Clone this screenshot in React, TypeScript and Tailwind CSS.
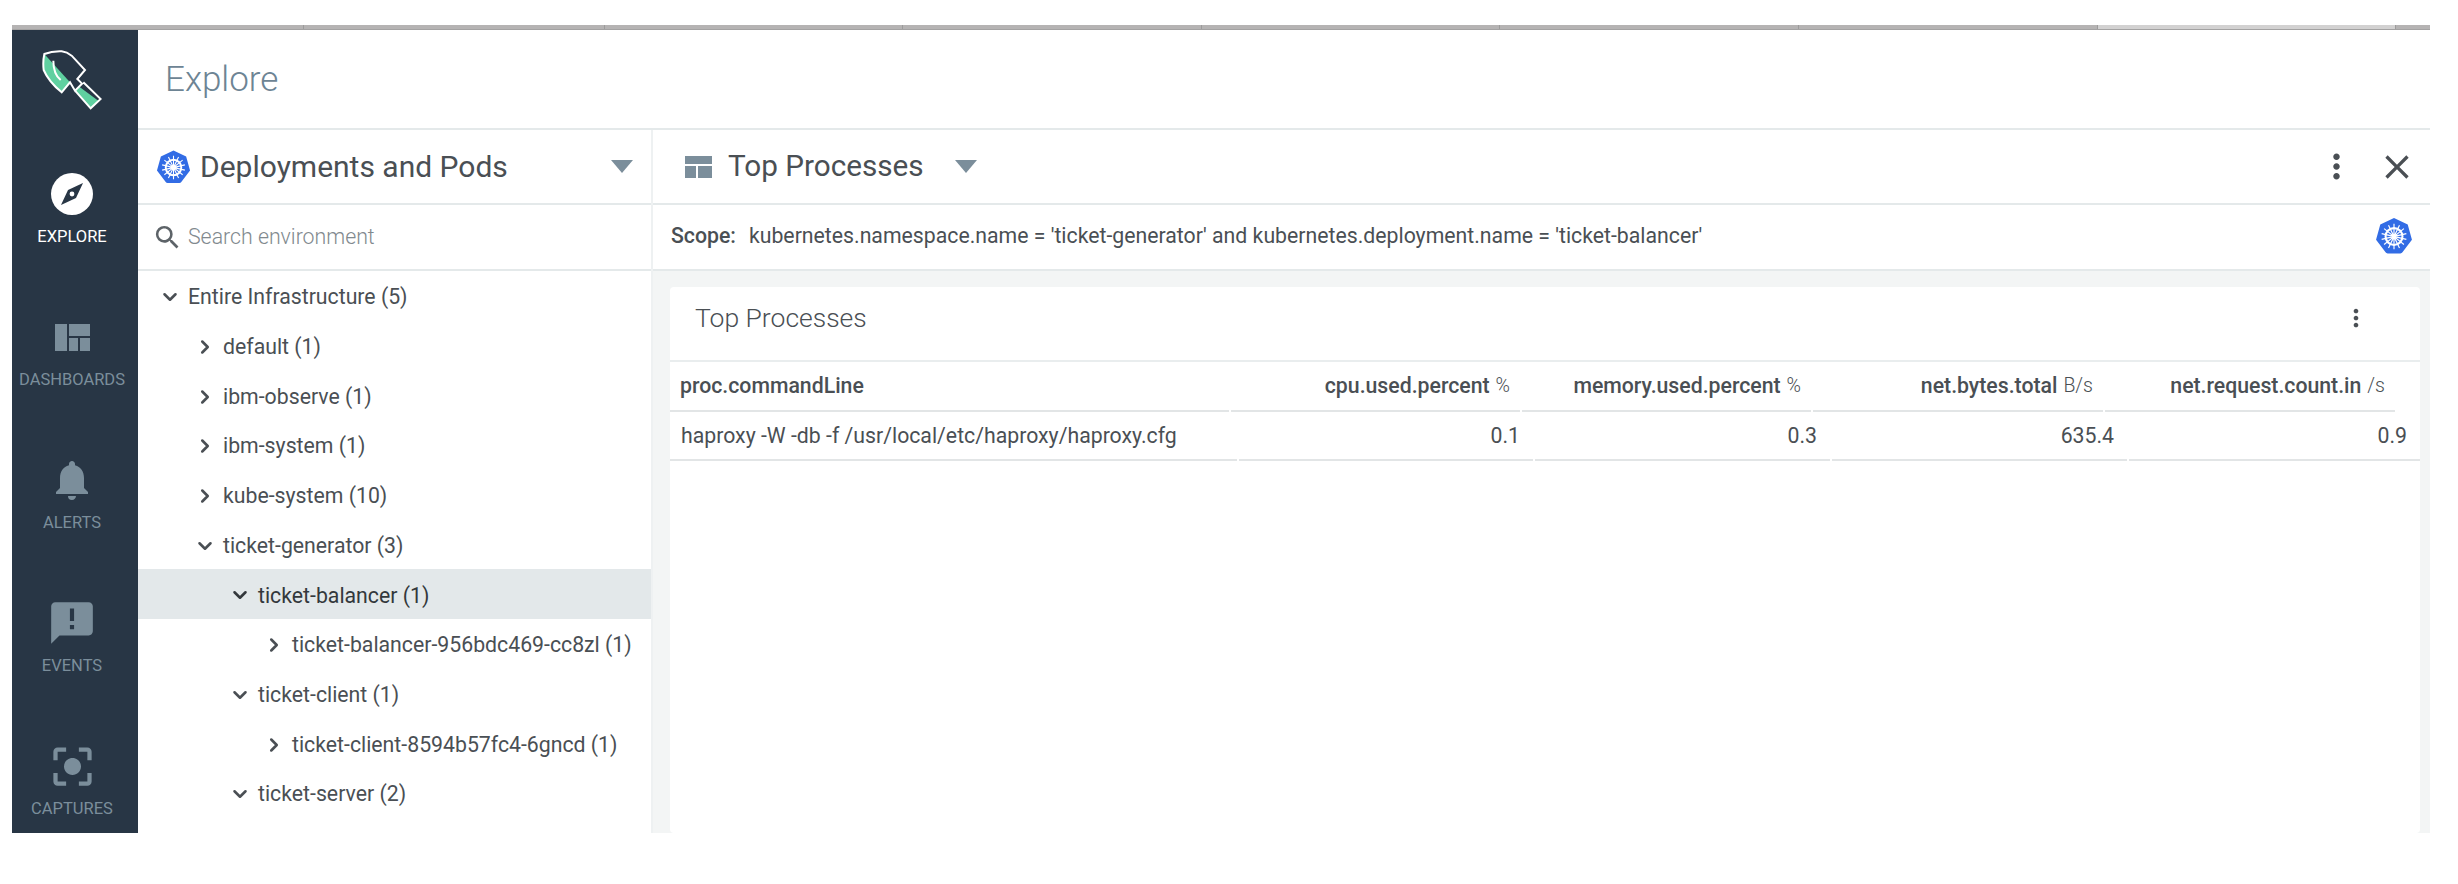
import { ChevronDown, ChevronRight } from 'lucide-react';
import {
  MdAnnouncement,
  MdCenterFocusStrong,
  MdClose,
  MdMoreVert,
  MdNotifications,
  MdSearch,
} from 'react-icons/md';

const KubeLogo = ({ className }: { className: string }) => (
  <svg viewBox="0 0 36 36" className={className}>
    <path
      d="M18 1 L31 7.2 L35 21.5 L26 33.5 Q25.4 34.5 24 34.5 L12 34.5 Q10.6 34.5 10 33.5 L1 21.5 L5 7.2 Z"
      fill="#326ce5"
    />
    <g stroke="#fff" fill="none">
      <circle cx="18" cy="18.5" r="8" strokeWidth="2" />
      <circle cx="18" cy="18.5" r="1.6" fill="#fff" stroke="none" />
      <path
        d="M18 6.5V30.5M8.6 11L27.4 26M27.4 11L8.6 26M6.3 21.2L29.7 15.8M29.7 21.2L6.3 15.8M12.8 29.3L23.2 7.7M23.2 29.3L12.8 7.7"
        strokeWidth="1.1"
      />
    </g>
  </svg>
);

const navItems = [
  { label: 'DASHBOARDS', icon: 'dash' },
  { label: 'ALERTS', icon: 'bell' },
  { label: 'EVENTS', icon: 'events' },
  { label: 'CAPTURES', icon: 'captures' },
];

const NavIcon = ({ icon }: { icon: string }) => {
  if (icon === 'dash') {
    return (
      <svg viewBox="0 0 35 27" className="w-[35px] h-[27px]" fill="#7b8e9b">
        <rect x="0" y="0" width="12" height="27" />
        <rect x="14" y="0" width="21" height="12" />
        <rect x="14" y="14" width="9" height="13" />
        <rect x="25" y="14" width="10" height="13" />
      </svg>
    );
  }
  if (icon === 'bell') return <MdNotifications className="w-[48px] h-[48px] text-[#7b8e9b]" />;
  if (icon === 'events') return <MdAnnouncement className="w-[50px] h-[50px] text-[#7b8e9b]" />;
  return <MdCenterFocusStrong className="w-[51px] h-[51px] text-[#7b8e9b]" />;
};

// strip of browser tabs cut off at the top of the screenshot
const tabStrip = [
  'w-[292px] bg-[#b5b3b3]',
  'w-[301px] bg-[#b5b3b3]',
  'w-[298px] bg-[#b5b3b3]',
  'w-[299px] bg-[#b5b3b3]',
  'w-[298px] bg-[#b5b3b3]',
  'w-[299px] bg-[#b5b3b3]',
  'w-[299px] bg-[#b5b3b3]',
  'w-[298px] bg-[#d2d1d1]',
  'flex-1 bg-[#b5b3b3]',
];

const tree = [
  { label: 'Entire Infrastructure (5)', open: true, indent: 'pl-[21px]' },
  { label: 'default (1)', open: false, indent: 'pl-[56px]' },
  { label: 'ibm-observe (1)', open: false, indent: 'pl-[56px]' },
  { label: 'ibm-system (1)', open: false, indent: 'pl-[56px]' },
  { label: 'kube-system (10)', open: false, indent: 'pl-[56px]' },
  { label: 'ticket-generator (3)', open: true, indent: 'pl-[56px]' },
  { label: 'ticket-balancer (1)', open: true, indent: 'pl-[91px]', active: true },
  { label: 'ticket-balancer-956bdc469-cc8zl (1)', open: false, indent: 'pl-[125px]' },
  { label: 'ticket-client (1)', open: true, indent: 'pl-[91px]' },
  { label: 'ticket-client-8594b57fc4-6gncd (1)', open: false, indent: 'pl-[125px]' },
  { label: 'ticket-server (2)', open: true, indent: 'pl-[91px]' },
];

const columns = [
  { name: 'cpu.used.percent', unit: '%', value: '0.1' },
  { name: 'memory.used.percent', unit: '%', value: '0.3' },
  { name: 'net.bytes.total', unit: 'B/s', value: '635.4' },
  { name: 'net.request.count.in', unit: '/s', value: '0.9' },
];

export default function App() {
  return (
    <div className="h-[884px] w-[2458px] overflow-hidden bg-white pt-[25px] pl-3 font-['Roboto',sans-serif] text-[#4a4f54]">
      <div className="flex h-[5px] w-[2418px] border-b-[1.5px] border-[#a3a2a2]">
        {tabStrip.map((tab, i) => (
          <div key={i} className={`${tab} border-r border-[#9c9b9b] last:border-r-0`} />
        ))}
      </div>
      <div className="flex h-[803px] w-[2418px]">
        {/* Sidebar */}
        <aside className="w-[126px] shrink-0 overflow-hidden bg-[#283645] pr-[6px]">
          <div className="flex h-[140px] justify-center pt-[20px]">
            <svg viewBox="0 0 180 180" className="w-[60px] h-[60px]">
              <path d="M7 12 L84 97 L59 127 Q20 95 5 60 Q2 35 7 12 Z" fill="#5fd0a0" />
              <path d="M99 122 L112 110 L169 152 L146 175 Z" fill="#5fd0a0" />
              <path
                d="M7 12 Q30 3 59 4 Q75 6 89 17 L129 60 L106 87 L120 101 L99 122 L84 97 L59 127 Q20 95 5 60 Q2 35 7 12 Z M124 97 L176 147 L146 175 L99 122"
                fill="none"
                stroke="#fff"
                strokeWidth="6"
              />
              <path d="M34 32 Q34 72 56 90" fill="none" stroke="#fff" strokeWidth="6" />
            </svg>
          </div>
          <div className="flex h-[143px] flex-col items-center">
            <div className="flex h-[48px] w-full items-center justify-center">
              <svg viewBox="0 0 42 42" className="w-[42px] h-[42px]">
                <circle cx="21" cy="21" r="21" fill="#fff" />
                <path d="M32 10 L25 25 L10 32 L17 17 Z" fill="#283645" />
                <circle cx="21" cy="21" r="2.4" fill="#fff" />
              </svg>
            </div>
            <span className="mt-[9px] text-[16.5px] leading-[20px] text-white">EXPLORE</span>
          </div>
          {navItems.map((item) => (
            <div key={item.label} className="flex h-[143px] flex-col items-center">
              <div className="flex h-[48px] w-full items-center justify-center">
                <NavIcon icon={item.icon} />
              </div>
              <span className="mt-[9px] whitespace-nowrap text-[16.5px] leading-[20px] text-[#7b8e9b]">{item.label}</span>
            </div>
          ))}
        </aside>

        {/* Main */}
        <main className="flex min-w-0 flex-1 flex-col">
          <div className="flex h-[100px] shrink-0 items-center border-b-2 border-[#e4e9ea] pt-[3px] pl-[27px]">
            <h1 className="text-[35px] font-light text-[#6d8494]">Explore</h1>
          </div>
          <div className="flex min-h-0 flex-1">
            {/* Tree panel */}
            <div className="w-[515px] shrink-0 overflow-hidden border-r-2 border-[#eef1f2]">
              <div className="flex h-[75px] items-center border-b-2 border-[#e4e9ea] pl-[18px] pr-[18px]">
                <KubeLogo className="w-[35px] h-[36px]" />
                <span className="ml-[9px] flex-1 text-[30px]">Deployments and Pods</span>
                <span className="h-0 w-0 border-x-[11px] border-t-[13px] border-x-transparent border-t-[#7b8e9b]" />
              </div>
              <div className="flex h-[66px] items-center border-b-2 border-[#e4e9ea] pl-[14px]">
                <MdSearch className="w-[31px] h-[31px] text-[#5d6368]" />
                <span className="ml-[5px] text-[21.3px] font-light text-[#81898e]">Search environment</span>
              </div>
              {tree.map((row) => (
                <div
                  key={row.label}
                  className={`flex h-[49.7px] items-center pt-[3px] ${row.indent} ${row.active ? 'bg-[#e3e8ea] text-[#33383c]' : ''}`}
                >
                  {row.open ? (
                    <ChevronDown className="w-[22px] h-[22px] shrink-0" strokeWidth={2.8} />
                  ) : (
                    <ChevronRight className="w-[22px] h-[22px] shrink-0" strokeWidth={2.8} />
                  )}
                  <span className="ml-[7px] whitespace-nowrap text-[21.25px]">{row.label}</span>
                </div>
              ))}
            </div>

            {/* Detail panel */}
            <div className="flex min-w-0 flex-1 flex-col">
              <div className="flex h-[75px] items-center border-b-2 border-[#e4e9ea] pl-[32px] pr-[13px]">
                <svg viewBox="0 0 27 22" className="w-[27px] h-[22px]" fill="#7b8e9b">
                  <rect x="0" y="0" width="27" height="8" />
                  <rect x="0" y="10" width="11" height="12" />
                  <rect x="13" y="10" width="14" height="12" />
                </svg>
                <span className="ml-[16px] text-[29.7px]">Top Processes</span>
                <span className="ml-[31px] h-0 w-0 border-x-[11px] border-t-[13px] border-x-transparent border-t-[#7b8e9b]" />
                <MdMoreVert className="ml-auto w-[39px] h-[39px] text-[#4a4f54]" />
                <MdClose className="ml-[21px] w-[40px] h-[40px] text-[#4a4f54]" />
              </div>
              <div className="flex h-[66px] items-center border-b-2 border-[#e4e9ea] pb-[3px] pl-[18px] pr-[17px] text-[21.25px]">
                <span className="font-medium">Scope:</span>
                <span className="ml-[13px]">
                  kubernetes.namespace.name = 'ticket-generator' and kubernetes.deployment.name = 'ticket-balancer'
                </span>
                <KubeLogo className="ml-auto w-[38px] h-[38px]" />
              </div>
              <div className="min-h-0 flex-1 bg-[#f3f5f5] pt-[16px] pl-[17px] pr-[10px]">
                <div className="h-full rounded-sm bg-white">
                  <div className="flex h-[75px] items-center border-b-2 border-[#e9edee] pb-[12px] pl-[25px] pr-[50px]">
                    <span className="text-[26.5px] font-light">Top Processes</span>
                    <MdMoreVert className="ml-auto w-[28px] h-[28px] text-[#4a4f54]" />
                  </div>
                  <div className="grid h-[50px] grid-cols-[559px_289px_289px_290px_290px] gap-x-[2px] pr-[26px]">
                    <div className="flex items-center border-b-2 border-[#e2e5e6] pl-[10px] text-[21.25px] font-medium">
                      proc.commandLine
                    </div>
                    {columns.map((col) => (
                      <div key={col.name} className="flex items-center justify-end border-b-2 border-[#e2e5e6] pr-[10px]">
                        <span className="text-[21.25px] font-medium">{col.name}</span>
                        <span className="ml-[6px] text-[19.5px] font-light">{col.unit}</span>
                      </div>
                    ))}
                  </div>
                  <div className="grid h-[49px] grid-cols-[567px_294px_295px_295px_1fr] gap-x-[2px] text-[21.25px]">
                    <div className="flex items-center border-b-2 border-[#e2e5e6] pl-[11px]">
                      haproxy -W -db -f /usr/local/etc/haproxy/haproxy.cfg
                    </div>
                    {columns.map((col) => (
                      <div key={col.name} className="flex items-center justify-end border-b-2 border-[#e2e5e6] pr-[13px]">
                        {col.value}
                      </div>
                    ))}
                  </div>
                </div>
              </div>
            </div>
          </div>
        </main>
      </div>
    </div>
  );
}
